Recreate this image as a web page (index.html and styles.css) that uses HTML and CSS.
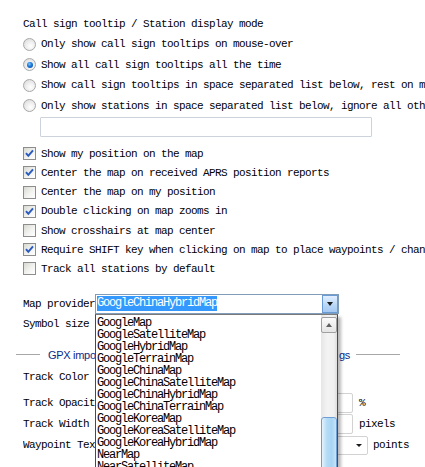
FILE: index.html
```
<!DOCTYPE html>
<html>
<head>
<meta charset="utf-8">
<link rel="stylesheet" href="styles.css">
</head>
<body>
<div class="page">
  <div class="title">Call sign tooltip / Station display mode</div>
  <div class="radios">
    <div class="opt r"><span class="radio"></span><span>Only show call sign tooltips on mouse-over</span></div>
    <div class="opt r"><span class="radio on"></span><span>Show all call sign tooltips all the time</span></div>
    <div class="opt r"><span class="radio"></span><span>Show call sign tooltips in space separated list below, rest on mouse-over</span></div>
    <div class="opt r"><span class="radio"></span><span>Only show stations in space separated list below, ignore all others</span></div>
  </div>
  <div class="filter"></div>
  <div class="checks">
    <div class="opt c"><span class="check on"><svg width="11" height="11" viewBox="0 0 11 11"><path d="M2 5.2 L4.3 7.8 L9 2.4" fill="none" stroke="#2a5bc1" stroke-width="2"/></svg></span><span>Show my position on the map</span></div>
    <div class="opt c"><span class="check on"><svg width="11" height="11" viewBox="0 0 11 11"><path d="M2 5.2 L4.3 7.8 L9 2.4" fill="none" stroke="#2a5bc1" stroke-width="2"/></svg></span><span>Center the map on received APRS position reports</span></div>
    <div class="opt c"><span class="check"></span><span>Center the map on my position</span></div>
    <div class="opt c"><span class="check on"><svg width="11" height="11" viewBox="0 0 11 11"><path d="M2 5.2 L4.3 7.8 L9 2.4" fill="none" stroke="#2a5bc1" stroke-width="2"/></svg></span><span>Double clicking on map zooms in</span></div>
    <div class="opt c"><span class="check"></span><span>Show crosshairs at map center</span></div>
    <div class="opt c"><span class="check on"><svg width="11" height="11" viewBox="0 0 11 11"><path d="M2 5.2 L4.3 7.8 L9 2.4" fill="none" stroke="#2a5bc1" stroke-width="2"/></svg></span><span>Require SHIFT key when clicking on map to place waypoints / change objects</span></div>
    <div class="opt c"><span class="check"></span><span>Track all stations by default</span></div>
  </div>

  <div class="row provider">
    <span class="label">Map provider</span>
    <div class="combo">
      <span class="sel">GoogleChinaHybridMap</span>
      <span class="dropbtn"><span class="arrow"></span></span>
    </div>
  </div>
  <div class="row symbol"><span class="label">Symbol size</span></div>

  <div class="group">
    <span class="gline left"></span>
    <div class="gtitle"><span>GPX impo</span><span>gs</span></div>
    <span class="gline right"></span>
  </div>

  <div class="row tcolor"><span class="label">Track Color</span></div>
  <div class="row topac"><span class="label">Track Opacity</span><span class="box"></span><span class="unit">%</span></div>
  <div class="row twidth"><span class="label">Track Width</span><span class="box"></span><span class="unit">pixels</span></div>
  <div class="row wtext"><span class="label">Waypoint Text size</span><span class="box combo2"><span class="arrow small"></span></span><span class="unit">points</span></div>

  <div class="dropdown">
    <div class="items">
      <div>GoogleMap</div>
      <div>GoogleSatelliteMap</div>
      <div>GoogleHybridMap</div>
      <div>GoogleTerrainMap</div>
      <div>GoogleChinaMap</div>
      <div>GoogleChinaSatelliteMap</div>
      <div>GoogleChinaHybridMap</div>
      <div>GoogleChinaTerrainMap</div>
      <div>GoogleKoreaMap</div>
      <div>GoogleKoreaSatelliteMap</div>
      <div>GoogleKoreaHybridMap</div>
      <div>NearMap</div>
      <div>NearSatelliteMap</div>
    </div>
    <div class="scroll">
      <div class="upbtn"><span class="uparrow"></span></div>
      <div class="thumb"></div>
    </div>
  </div>
</div>
</body>
</html>
```
FILE: styles.css
```
html, body {
  margin: 0;
  padding: 0;
  background: #fff;
}
body {
  width: 425px;
  height: 467px;
  overflow: hidden;
  font-family: "Liberation Mono", "DejaVu Sans Mono", monospace;
  font-size: 11px;
  letter-spacing: -0.6px;
  color: #000;
}
.page {
  position: relative;
  padding-left: 23px;
  height: 467px;
  overflow: hidden;
  white-space: nowrap;
}
.title {
  padding-top: 14px;
  height: 20px;
  line-height: 20px;
}
.opt {
  display: flex;
  align-items: center;
  gap: 5px;
}
.opt.r { height: 20.5px; }
.opt.c { height: 19.2px; }
.radio {
  flex: 0 0 auto;
  width: 11px;
  height: 11px;
  border: 1px solid #a8a8a8;
  border-radius: 50%;
  background: radial-gradient(circle at 60% 65%, #ffffff 0%, #f2f2f2 35%, #d6d6d6 100%);
  position: relative;
}
.radio.on::after {
  content: "";
  position: absolute;
  left: 2.5px;
  top: 2.5px;
  width: 6px;
  height: 6px;
  border-radius: 50%;
  background: radial-gradient(circle at 40% 35%, #7cc7ff 0%, #1a78d8 45%, #0a3f9a 100%);
}
.check {
  flex: 0 0 auto;
  width: 11px;
  height: 11px;
  border: 1px solid #8d8d8d;
  background: linear-gradient(135deg, #d9d9d3 0%, #f4f4f2 60%, #ffffff 100%);
  display: flex;
  align-items: center;
  justify-content: center;
}
.check svg { display: block; }
.filter {
  margin-top: 0.5px;
  margin-left: 17px;
  width: 330px;
  height: 18px;
  border: 1px solid #ccd3da;
  border-radius: 1px;
}
.checks { margin-top: 7.7px; }

.row {
  display: flex;
  align-items: center;
  height: 20px;
}
.label {
  flex: 0 0 72px;
  width: 72px;
  overflow: hidden;
}
.provider { margin-top: 15.4px; }
.combo {
  position: relative;
  width: 241px;
  height: 18px;
  border: 1px solid #7f9db9;
  display: flex;
  align-items: center;
  padding-left: 1px;
  box-sizing: content-box;
}
.sel {
  background: #3399ff;
  color: #fff;
  height: 15px;
  line-height: 15px;
  font-size: 12px;
  letter-spacing: -1.2px;
}
.dropbtn {
  position: absolute;
  right: 0;
  top: 0;
  width: 14px;
  height: 16px;
  border: 1px solid #6b9bd6;
  background: linear-gradient(#e2efff, #b7d6f7 60%, #a6c9f1);
  display: flex;
  align-items: center;
  justify-content: center;
}
.arrow {
  width: 0;
  height: 0;
  border-left: 3.5px solid transparent;
  border-right: 3.5px solid transparent;
  border-top: 4px solid #1a1a1a;
}

.group {
  margin-top: 11px;
  margin-left: -7px;
  height: 20px;
  display: flex;
  align-items: center;
}
.gline {
  height: 1px;
  background: #a8a8a8;
}
.gline.left { width: 24px; margin-right: 8px; }
.gline.right { width: 44px; margin-left: 6px; }
.gtitle {
  width: 302px;
  display: flex;
  justify-content: space-between;
  font-family: "Liberation Sans", Arial, sans-serif;
  font-size: 11px;
  letter-spacing: -0.3px;
  color: #0a2a8c;
}

.tcolor { margin-top: 2.5px; }
.topac { margin-top: 5.5px; }
.twidth { margin-top: 1px; }
.wtext { margin-top: 2px; height: 19px; }
.box {
  flex: 0 0 auto;
  width: 256px;
  height: 18px;
  border: 1px solid #d2d2d2;
  border-radius: 2px;
}
.wtext .box { width: 271px; height: 17px; position: relative; }
.combo2 .arrow {
  position: absolute;
  right: 5px;
  top: 7px;
  border-left-width: 3px;
  border-right-width: 3px;
  border-top-width: 3px;
}
.unit { margin-left: 6px; }
.wtext .unit { margin-left: 5px; }

.dropdown {
  position: absolute;
  left: 95px;
  top: 314px;
  width: 241px;
  height: 170px;
  border: 1px solid #4a4a4a;
  border-top-color: #7a7a7a;
  background: #fff;
  box-shadow: 3px 3px 3px rgba(0, 0, 0, 0.28);
  display: flex;
}
.items {
  flex: 1;
  padding-top: 1.5px;
  padding-left: 1px;
  font-size: 12px;
  letter-spacing: -1.2px;
  line-height: 12px;
}
.scroll {
  position: relative;
  width: 16px;
  background: linear-gradient(to right, #e6e6e6, #f3f3f3 40%, #f0f0f0 80%, #dcdcdc);
}
.upbtn {
  position: absolute;
  left: 0;
  top: 2px;
  width: 14px;
  height: 14px;
  border: 1px solid #a0a0a0;
  border-radius: 2px;
  background: linear-gradient(#fbfbfb, #e4e4e4);
  display: flex;
  align-items: center;
  justify-content: center;
}
.uparrow {
  width: 0;
  height: 0;
  border-left: 3.5px solid transparent;
  border-right: 3.5px solid transparent;
  border-bottom: 4px solid #606060;
}
.thumb {
  position: absolute;
  left: 0;
  top: 102px;
  width: 14px;
  height: 80px;
  border: 1px solid #6f9fd2;
  border-radius: 3px;
  background: linear-gradient(to right, #e4f2fc, #b4dcf6 35%, #a8d4f3 70%, #c5e4f8);
}
```
